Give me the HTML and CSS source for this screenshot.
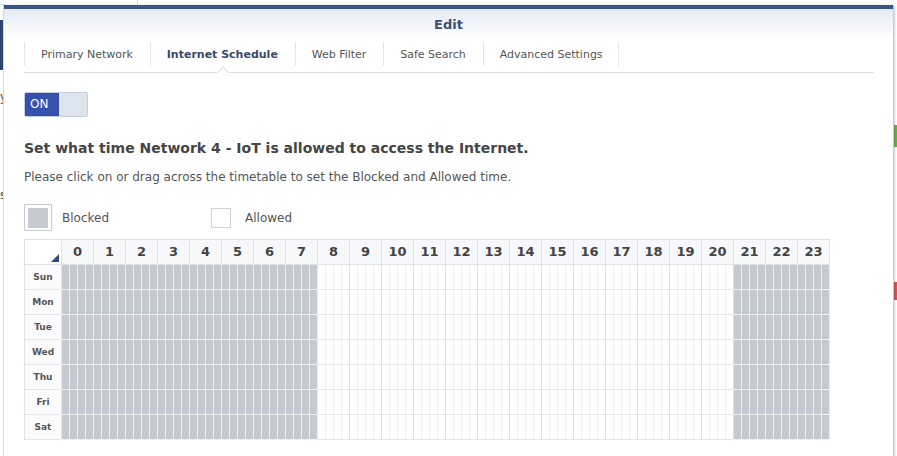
FILE: index.html
```html
<!DOCTYPE html>
<html>
<head>
<meta charset="utf-8">
<link rel="stylesheet" href="styles.css">
</head>
<body>
<div class="backdrop">
  <div class="bd-top"><span class="bd-dots">..</span><span class="bd-line"></span></div>
  <div class="bd-left"></div>
  <span class="bd-char bd-y">y</span>
  <span class="bd-char bd-s">s</span>
  <div class="bd-right">
    <span class="bd-green"></span>
    <span class="bd-red"></span>
  </div>
</div>

<div class="dialog">
  <div class="dlg-head">Edit</div>
  <div class="dlg-body">
    <div class="tabs">
      <div class="tab">Primary Network</div>
      <div class="tab active">Internet Schedule</div>
      <div class="tab">Web Filter</div>
      <div class="tab">Safe Search</div>
      <div class="tab last">Advanced Settings</div>
    </div>

    <div class="toggle"><span class="on">ON</span><span class="off"></span></div>

    <h2 class="heading">Set what time Network 4 - IoT is allowed to access the Internet.</h2>
    <p class="hint">Please click on or drag across the timetable to set the Blocked and Allowed time.</p>

    <div class="legend">
      <div class="legend-item"><span class="swatch selected"><span class="box blocked"></span></span><span class="lbl">Blocked</span></div>
      <div class="legend-item"><span class="swatch"><span class="box allowed"></span></span><span class="lbl">Allowed</span></div>
    </div>

    <div class="sched">
      <div class="corner"></div>
      <div class="hr">0</div><div class="hr">1</div><div class="hr">2</div><div class="hr">3</div><div class="hr">4</div><div class="hr">5</div><div class="hr">6</div><div class="hr">7</div><div class="hr">8</div><div class="hr">9</div><div class="hr">10</div><div class="hr">11</div><div class="hr">12</div><div class="hr">13</div><div class="hr">14</div><div class="hr">15</div><div class="hr">16</div><div class="hr">17</div><div class="hr">18</div><div class="hr">19</div><div class="hr">20</div><div class="hr">21</div><div class="hr">22</div><div class="hr">23</div>

      <div class="day">Sun</div>
      <i class="c b"></i><i class="c b"></i><i class="c b"></i><i class="c b"></i><i class="c b"></i><i class="c b"></i><i class="c b"></i><i class="c b"></i><i class="c a"></i><i class="c a"></i><i class="c a"></i><i class="c a"></i><i class="c a"></i><i class="c a"></i><i class="c a"></i><i class="c a"></i><i class="c a"></i><i class="c a"></i><i class="c a"></i><i class="c a"></i><i class="c a"></i><i class="c b"></i><i class="c b"></i><i class="c b"></i>
      <div class="day">Mon</div>
      <i class="c b"></i><i class="c b"></i><i class="c b"></i><i class="c b"></i><i class="c b"></i><i class="c b"></i><i class="c b"></i><i class="c b"></i><i class="c a"></i><i class="c a"></i><i class="c a"></i><i class="c a"></i><i class="c a"></i><i class="c a"></i><i class="c a"></i><i class="c a"></i><i class="c a"></i><i class="c a"></i><i class="c a"></i><i class="c a"></i><i class="c a"></i><i class="c b"></i><i class="c b"></i><i class="c b"></i>
      <div class="day">Tue</div>
      <i class="c b"></i><i class="c b"></i><i class="c b"></i><i class="c b"></i><i class="c b"></i><i class="c b"></i><i class="c b"></i><i class="c b"></i><i class="c a"></i><i class="c a"></i><i class="c a"></i><i class="c a"></i><i class="c a"></i><i class="c a"></i><i class="c a"></i><i class="c a"></i><i class="c a"></i><i class="c a"></i><i class="c a"></i><i class="c a"></i><i class="c a"></i><i class="c b"></i><i class="c b"></i><i class="c b"></i>
      <div class="day">Wed</div>
      <i class="c b"></i><i class="c b"></i><i class="c b"></i><i class="c b"></i><i class="c b"></i><i class="c b"></i><i class="c b"></i><i class="c b"></i><i class="c a"></i><i class="c a"></i><i class="c a"></i><i class="c a"></i><i class="c a"></i><i class="c a"></i><i class="c a"></i><i class="c a"></i><i class="c a"></i><i class="c a"></i><i class="c a"></i><i class="c a"></i><i class="c a"></i><i class="c b"></i><i class="c b"></i><i class="c b"></i>
      <div class="day">Thu</div>
      <i class="c b"></i><i class="c b"></i><i class="c b"></i><i class="c b"></i><i class="c b"></i><i class="c b"></i><i class="c b"></i><i class="c b"></i><i class="c a"></i><i class="c a"></i><i class="c a"></i><i class="c a"></i><i class="c a"></i><i class="c a"></i><i class="c a"></i><i class="c a"></i><i class="c a"></i><i class="c a"></i><i class="c a"></i><i class="c a"></i><i class="c a"></i><i class="c b"></i><i class="c b"></i><i class="c b"></i>
      <div class="day">Fri</div>
      <i class="c b"></i><i class="c b"></i><i class="c b"></i><i class="c b"></i><i class="c b"></i><i class="c b"></i><i class="c b"></i><i class="c b"></i><i class="c a"></i><i class="c a"></i><i class="c a"></i><i class="c a"></i><i class="c a"></i><i class="c a"></i><i class="c a"></i><i class="c a"></i><i class="c a"></i><i class="c a"></i><i class="c a"></i><i class="c a"></i><i class="c a"></i><i class="c b"></i><i class="c b"></i><i class="c b"></i>
      <div class="day">Sat</div>
      <i class="c b"></i><i class="c b"></i><i class="c b"></i><i class="c b"></i><i class="c b"></i><i class="c b"></i><i class="c b"></i><i class="c b"></i><i class="c a"></i><i class="c a"></i><i class="c a"></i><i class="c a"></i><i class="c a"></i><i class="c a"></i><i class="c a"></i><i class="c a"></i><i class="c a"></i><i class="c a"></i><i class="c a"></i><i class="c a"></i><i class="c a"></i><i class="c b"></i><i class="c b"></i><i class="c b"></i>
    </div>
  </div>
</div>
</body>
</html>
```

FILE: styles.css
```css
* { box-sizing: border-box; }

html, body {
  margin: 0;
  padding: 0;
}

body {
  width: 897px;
  height: 456px;
  overflow: hidden;
  position: relative;
  background: #fff;
  font-family: "DejaVu Sans", "Liberation Sans", sans-serif;
  color: #444;
}

/* ---------- underlying page (mostly hidden) ---------- */
.backdrop {
  position: absolute;
  inset: 0;
}
.bd-top {
  height: 5px;
  display: flex;
  align-items: flex-start;
}
.bd-dots {
  font-size: 6px;
  line-height: 5px;
  color: #333;
  width: 137px;
  padding-left: 1px;
}
.bd-line {
  width: 1px;
  height: 5px;
  background: #d8d8d8;
}
.bd-left {
  position: absolute;
  left: 0;
  top: 20px;
  width: 4px;
  height: 50px;
  background: #2e4473;
}
.bd-char {
  position: absolute;
  left: 0;
  font-size: 12px;
  line-height: 14px;
  color: #444;
}
.bd-y { top: 90px; }
.bd-s { top: 188px; }
.bd-right {
  position: absolute;
  right: 0;
  top: 0;
  width: 3px;
  height: 456px;
}
.bd-green {
  position: absolute;
  left: 0;
  top: 125px;
  width: 3px;
  height: 22px;
  background: #67b04a;
}
.bd-red {
  position: absolute;
  left: 0;
  top: 282px;
  width: 3px;
  height: 18px;
  background: #d9534f;
}

/* ---------- dialog ---------- */
.dialog {
  position: absolute;
  left: 4px;
  top: 5px;
  width: 889px;
  height: 470px;
  background: #fff;
  border-top: 4px solid #3b5585;
  box-shadow: -1px 0 0 #d3d7dd, 1px 0 0 #c9cdd3, 2px 0 2px rgba(0,0,0,0.18);
}

.dlg-head {
  height: 31px;
  padding-top: 4px;
  background: linear-gradient(#e5eaf2, #fff);
  text-align: center;
  font-weight: bold;
  font-size: 13px;
  line-height: 24px;
  color: #3a4e76;
}

.dlg-body {
  padding: 0 19px 0 20px;
}

/* tabs */
.tabs {
  display: flex;
  height: 33px;
  padding-bottom: 4px;
  border-bottom: 1px solid #dcdfe3;
}
.tab {
  position: relative;
  display: flex;
  align-items: center;
  padding: 0 16.8px 0 17px;
  font-size: 11px;
  color: #555;
  white-space: nowrap;
}
.tab::before {
  content: "";
  position: absolute;
  left: 0;
  top: 2px;
  bottom: 2px;
  width: 1px;
  background: #e3e5e8;
}
.tab.last::after {
  content: "";
  position: absolute;
  right: 0;
  top: 2px;
  bottom: 2px;
  width: 1px;
  background: #e3e5e8;
}
.tab.active {
  font-weight: bold;
  color: #3a4a6b;
}
.tab.active::after {
  content: "";
  position: absolute;
  left: 50%;
  bottom: -8px;
  width: 7px;
  height: 7px;
  margin-left: -3px;
  background: #fff;
  border-left: 1px solid #dcdfe3;
  border-top: 1px solid #dcdfe3;
  transform: rotate(45deg);
}

/* toggle */
.toggle {
  display: flex;
  width: 64px;
  height: 25px;
  margin-top: 19px;
  border: 1px solid #c6cedb;
  border-radius: 2px;
  overflow: hidden;
}
.toggle .on {
  width: 34px;
  background: #3452ad;
  color: #fff;
  font-size: 12px;
  line-height: 23px;
  padding-left: 5px;
}
.toggle .off {
  flex: 1;
  background: #dde4ee;
}

.heading {
  margin: 21px 0 0;
  font-size: 14px;
  line-height: 20px;
  font-weight: bold;
  color: #454545;
}

.hint {
  margin: 10px 0 0;
  font-size: 12px;
  line-height: 18px;
  color: #555;
}

/* legend */
.legend {
  display: flex;
  margin-top: 18px;
  height: 27px;
}
.legend-item {
  display: flex;
  align-items: center;
  gap: 10px;
  width: 183px;
  font-size: 12px;
  color: #555;
}
.swatch {
  width: 28px;
  height: 27px;
  display: flex;
  align-items: center;
  justify-content: center;
  border: 1px solid transparent;
}
.swatch.selected {
  border-color: #c8cbd1;
}
.box {
  width: 20px;
  height: 20px;
}
.box.blocked { background: #c5c9d1; }
.box.allowed { background: #fff; border: 1px solid #cfd2d6; }

/* schedule grid */
.sched {
  display: grid;
  grid-template-columns: 37px repeat(24, 32px);
  grid-auto-rows: 25px;
  width: 806px;
  margin-top: 8px;
  border-top: 1px solid #dde1e6;
  border-left: 1px solid #dde1e6;
}
.corner {
  position: relative;
  background: #fff;
  border-right: 1px solid #e1e5ea;
  border-bottom: 1px solid #dfe3e8;
}
.corner::after {
  content: "";
  position: absolute;
  right: 2px;
  bottom: 2px;
  width: 0;
  height: 0;
  border-left: 8px solid transparent;
  border-bottom: 8px solid #2f4a80;
}
.hr {
  background: #f6f8fa;
  border-right: 1px solid #e1e5ea;
  border-bottom: 1px solid #dfe3e8;
  text-align: center;
  font-weight: bold;
  font-size: 13px;
  line-height: 24px;
  color: #444;
}
.day {
  background: #fbfbfc;
  border-right: 1px solid #e1e5ea;
  border-bottom: 1px solid #e4e7eb;
  text-align: center;
  font-weight: bold;
  font-size: 9px;
  line-height: 24px;
  color: #555;
}
.c { display: block; }
.c.b {
  background:
    linear-gradient(#f3f4f6, #f3f4f6) left bottom / 100% 1px no-repeat,
    repeating-linear-gradient(to right, #c5c9d1 0 7px, #eef0f3 7px 8px);
}
.c.a {
  background:
    linear-gradient(#e3e6ea, #e3e6ea) left bottom / 100% 1px no-repeat,
    linear-gradient(#dcdfe4, #dcdfe4) right top / 1px 100% no-repeat,
    repeating-linear-gradient(to right, #fff 0 7px, #eceef2 7px 8px);
}
```
